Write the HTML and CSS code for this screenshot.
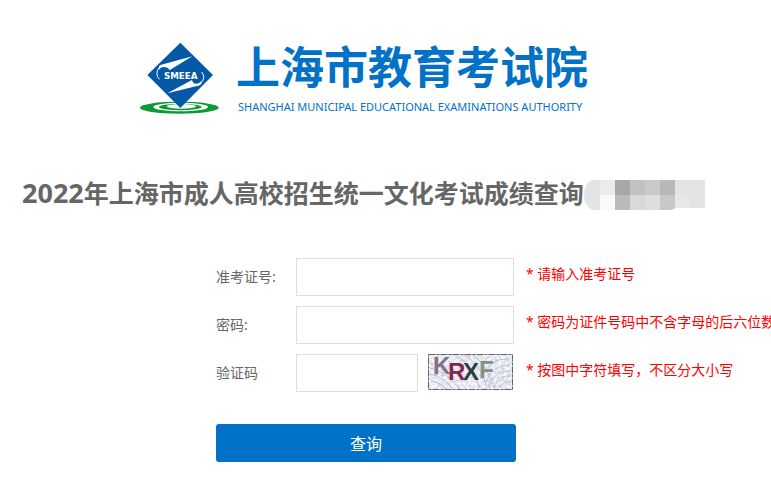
FILE: index.html
```html
<!DOCTYPE html>
<html lang="zh-CN">
<head>
    <meta charset="UTF-8">
    <meta name="viewport" content="width=device-width, initial-scale=1.0">
    <title>上海市教育考试院</title>
    <link rel="stylesheet" href="styles.css">
</head>
<body>

    <header class="header">
        <svg class="logo" viewBox="30 36 240 219" aria-hidden="true">
            <ellipse cx="148" cy="233" rx="118" ry="18" fill="#0a9a35"/>
            <ellipse cx="152" cy="231" rx="82" ry="13" fill="#fff"/>
            <ellipse cx="151" cy="231" rx="64" ry="10" fill="#0a9a35"/>
            <ellipse cx="154" cy="229" rx="44" ry="7" fill="#fff"/>
            <path d="M151 38L249 135L151 234L52 135Z" fill="#0459a6"/>
            <path d="M87 108Q92 103 102 102L187 79L118 121Q115 111 101 111Q91 111 87 119Z" fill="#fff"/>
            <path d="M214 162Q210 168 198 169L112 190L186 150Q188 161 199 161Q209 161 214 153Z" fill="#fff"/>
            <path d="M87 113Q74 132 88 148M215 126Q228 142 214 158" fill="none" stroke="#fff" stroke-width="3"/>
            <text x="152" y="146" text-anchor="middle" class="logoText">SMEEA</text>
        </svg>
        <div class="brand">
            <div class="brandName">上海市教育考试院</div>
            <div class="brandSub">SHANGHAI MUNICIPAL EDUCATIONAL EXAMINATIONS AUTHORITY</div>
        </div>
    </header>

    <div class="titleBar">
        <h1><span class="year">2022</span>年上海市成人高校招生统一文化考试成绩查询</h1>
        <svg class="mosaic" viewBox="0 0 121 30" aria-hidden="true">
            <path d="M8 0H121V28H92L88 30H8Q0 26 0 15Q0 3 8 0Z" fill="#e4e4e5"/>
            <path d="M16 0H31V15H16Z" fill="#ebebea"/>
            <path d="M16 15H31V30H16Z" fill="#fafaf9"/>
            <path d="M31 0H46V15H31Z" fill="#a7a7a7"/>
            <path d="M31 15H46V30H31Z" fill="#bababa"/>
            <path d="M46 0H61V15H46Z" fill="#c1c1c1"/>
            <path d="M46 15H61V30H46Z" fill="#d8dad9"/>
            <path d="M61 0H76V15H61Z" fill="#c8c9cb"/>
            <path d="M61 15H76V30H61Z" fill="#dddfde"/>
            <path d="M76 0H91V15H76Z" fill="#b9b8b7"/>
            <path d="M76 15H91V28L87 30H76Z" fill="#c8c8c8"/>
            <path d="M91 15H106V28H91Z" fill="#e7e7e8"/>
        </svg>
    </div>

    <form class="queryForm">
        <div class="formRow">
            <label for="examNo">准考证号:</label>
            <input type="text" id="examNo">
            <span class="tip">* 请输入准考证号</span>
        </div>
        <div class="formRow">
            <label for="password">密码:</label>
            <input type="password" id="password">
            <span class="tip">* 密码为证件号码中不含字母的后六位数</span>
        </div>
        <div class="formRow">
            <label for="code">验证码</label>
            <div class="codeBox">
                <input type="text" id="code">
                <svg class="captcha" viewBox="0 0 85 36" role="img" aria-label="验证码图片">
                    <filter id="noise" x="0" y="0" width="100%" height="100%">
                        <feTurbulence type="fractalNoise" baseFrequency="0.3 0.35" numOctaves="3" seed="8"/>
                        <feColorMatrix values="0.6 0.2 0 0 0.41  0.6 0.2 0 0 0.43  0.6 0.1 0 0 0.54  0 0 0 0 1"/>
                    </filter>
                    <rect width="85" height="36" filter="url(#noise)"/>
                    <g fill="none" stroke="#aaa9bd" stroke-width="1" opacity=".7">
                        <path d="M2 14Q17 17 31 34M2 20Q15 22 25 35M3 27Q12 28 18 35M28 2Q45 10 52 34M36 1Q52 9 59 33M44 1Q58 8 66 34"/>
                        <path d="M57 31Q64 9 82 12M60 34Q67 15 83 17M66 34Q71 20 83 22M71 34Q75 27 83 28M53 25Q62 3 81 5"/>
                    </g>
                    <g class="captchaText">
                        <text x="5" y="20" fill="#846f8b">K</text>
                        <text x="20" y="26" fill="#842650">R</text>
                        <text x="35" y="26" fill="#303d43">X</text>
                        <text x="51" y="24" fill="#829187">F</text>
                    </g>
                    <rect x=".5" y=".5" width="84" height="35" fill="none" stroke="#62636f" stroke-dasharray="7 1 3 1"/>
                </svg>
            </div>
            <span class="tip">* 按图中字符填写，不区分大小写</span>
        </div>
        <button type="submit" class="queryBtn">查询</button>
    </form>

</body>
</html>
```
FILE: styles.css
```css
* {
    box-sizing: border-box;
}
body {
    margin: 0;
    background: #fff;
    color: #666;
    font-family: "Noto Sans", "Noto Sans CJK SC", sans-serif;
    font-size: 14px;
    overflow-x: hidden;
}
.header {
    display: flex;
    padding: 42px 0 0 140px;
}
.logo {
    width: 80px;
    height: 73px;
    flex: none;
}
.logoText {
    font-family: "DejaVu Sans", sans-serif;
    font-size: 26px;
    font-weight: bold;
    fill: #fff;
}
.brand {
    margin-left: 16px;
    color: #0271c8;
    white-space: nowrap;
}
.brandName {
    font-family: "Noto Sans CJK SC", sans-serif;
    font-size: 44px;
    font-weight: bold;
    line-height: 46px;
}
.brandSub {
    padding: 10px 0 0 2px;
    font-size: 11px;
    line-height: 18px;
}
.titleBar {
    display: flex;
    align-items: center;
    margin-top: 60px;
    padding-left: 22px;
}
.titleBar h1 {
    margin: 0;
    padding-bottom: 4px;
    font-size: 25px;
    line-height: 34px;
    white-space: nowrap;
}
.titleBar .year {
    font-size: 27px;
}
.mosaic {
    width: 121px;
    height: 30px;
    flex: none;
}
.queryForm {
    padding: 44px 0 24px 216px;
}
.formRow {
    display: grid;
    grid-template-columns: 80px 218px auto;
    height: 38px;
    margin-bottom: 10px;
    white-space: nowrap;
}
.formRow label {
    line-height: 38px;
}
.formRow input {
    width: 100%;
    height: 38px;
    padding: 0 10px;
    border: 1px solid #ddd;
    background: #fff;
    font-size: 14px;
    outline: none;
}
.codeBox {
    display: flex;
    gap: 10px;
}
.formRow .codeBox input {
    width: 122px;
}
.captcha {
    width: 85px;
    height: 36px;
    flex: none;
}
.captchaText {
    font-family: "Liberation Sans", sans-serif;
    font-size: 24px;
    font-weight: bold;
}
.tip {
    padding-left: 12px;
    color: #f00;
    line-height: 32px;
}
.queryBtn {
    display: block;
    width: 300px;
    height: 38px;
    margin-top: 32px;
    padding: 0;
    border: none;
    border-radius: 3px;
    background: #0271c8;
    color: #fff;
    font-family: inherit;
    font-size: 16px;
    cursor: pointer;
}
```
